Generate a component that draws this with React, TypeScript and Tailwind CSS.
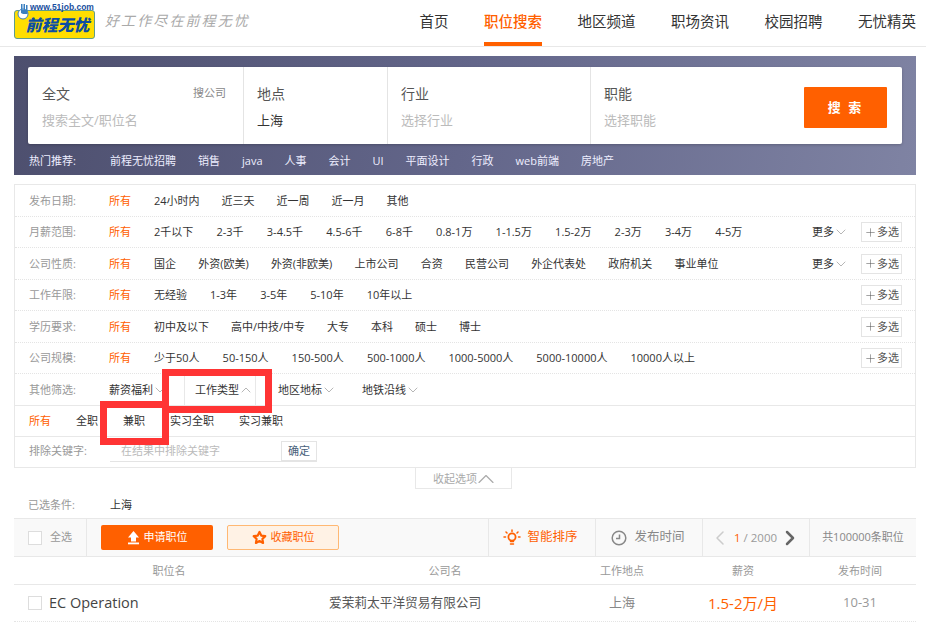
import { ChevronDown, ChevronUp, ChevronLeft, ChevronRight, Plus } from 'lucide-react'

const navItems = ['首页', '职位搜索', '地区频道', '职场资讯', '校园招聘', '无忧精英']
const hotItems = ['前程无忧招聘', '销售', 'java', '人事', '会计', 'UI', '平面设计', '行政', 'web前端', '房地产']

const filterRows = [
  { label: '发布日期:', gap: 'gap-[22px]', items: ['24小时内', '近三天', '近一周', '近一月', '其他'] },
  { label: '月薪范围:', gap: 'gap-[23.200px]', items: ['2千以下', '2-3千', '3-4.5千', '4.5-6千', '6-8千', '0.8-1万', '1-1.5万', '1.5-2万', '2-3万', '3-4万', '4-5万'], more: true, multi: true },
  { label: '公司性质:', gap: 'gap-[22.200px]', items: ['国企', '外资(欧美)', '外资(非欧美)', '上市公司', '合资', '民营公司', '外企代表处', '政府机关', '事业单位'], more: true, multi: true },
  { label: '工作年限:', gap: 'gap-[23px]', items: ['无经验', '1-3年', '3-5年', '5-10年', '10年以上'], multi: true },
  { label: '学历要求:', gap: 'gap-[22px]', items: ['初中及以下', '高中/中技/中专', '大专', '本科', '硕士', '博士'], multi: true },
  { label: '公司规模:', gap: 'gap-[23px]', items: ['少于50人', '50-150人', '150-500人', '500-1000人', '1000-5000人', '5000-10000人', '10000人以上'], multi: true },
]

function SmallChevron({ up }: { up?: boolean }) {
  const Icon = up ? ChevronUp : ChevronDown
  return <Icon size={16} strokeWidth={1.300} className="mr-[-2px] ml-[-1px] text-[#aaa]" />
}

function SearchField({ label, value, width, dark }: { label: string; value: string; width: string; dark?: boolean }) {
  return (
    <div className={`${width} h-full shrink-0 border-r border-[#e4e4e4] pl-[13px] pt-[16px]`}>
      <div className="text-[14px] leading-[22px] text-[#555]">{label}</div>
      <div className={`mt-[4px] text-[13px] leading-[22px] ${dark ? 'text-[#333]' : 'text-[#bbb]'}`}>{value}</div>
    </div>
  )
}

function Logo() {
  return (
    <div className="relative ml-[14px] mt-[10px] flex h-[29px] w-[81px] shrink-0 items-center justify-center rounded-[3px] border border-[#5f9c8c] bg-[#ffde00]">
      <span className="pl-[6px] text-[16px] leading-none font-black text-[#0b4ea2] italic">前程无忧</span>
      <span className="absolute top-[-8px] left-[15px] text-[8.500px] leading-[8px] font-bold whitespace-nowrap text-[#1a4fa0] [font-family:'Liberation_Sans',sans-serif]">www.51job.com</span>
      <svg className="absolute top-[-8px] left-[2px]" width="13" height="17" viewBox="0 0 13 17">
        <circle cx="6" cy="11" r="5" fill="#fff" stroke="#3a7fc0" />
        <path d="M4 10V1h1.500v6h1V1H8v6h1V2h1.500v9H6z" fill="#3a7fc0" />
      </svg>
    </div>
  )
}

function Toolbar() {
  return (
    <div className="flex h-[39px] border-y border-[#e8e8e8] bg-[#f9f9f9]">
      <div className="flex w-[73px] shrink-0 items-center border-r border-[#e8e8e8] pl-[14px]">
        <span className="h-[14px] w-[14px] border border-[#ddd] bg-white" />
        <span className="ml-[8px] text-[11px] text-[#999]">全选</span>
      </div>
      <div className="flex flex-1 items-center gap-[14px] pl-[14px]">
        <button className="flex h-[25px] w-[112px] items-center justify-center gap-[4px] rounded-[2px] bg-[#ff6000] text-[11px] text-white">
          <svg width="13" height="15" viewBox="0 0 13 15" fill="#fff">
            <path d="M6.500 1l5.500 6.500H9v4H4v-4H1z" />
            <rect x="1" y="12.500" width="11" height="1.800" />
          </svg>
          申请职位
        </button>
        <button className="flex h-[25px] w-[112px] items-center justify-center gap-[4px] rounded-[2px] border border-[#ffb873] bg-[#fff2e5] text-[11px] text-[#ff6000]">
          <svg width="15" height="15" viewBox="0 0 24 24" fill="none" stroke="#ff6000" strokeWidth="3.500" strokeLinejoin="round">
            <path d="M12 3l2.800 5.900 6.400.9-4.600 4.500 1.100 6.400L12 17.700l-5.700 3 1.100-6.400-4.600-4.500 6.400-.9z" />
          </svg>
          收藏职位
        </button>
      </div>
      <div className="flex w-[107px] shrink-0 items-center justify-center gap-[6px] border-l border-[#e8e8e8] pr-[3px] text-[12.500px] text-[#ff6000]">
        <svg width="18" height="18" viewBox="0 0 18 18" fill="none" stroke="#ff6000" strokeWidth="1.500" strokeLinecap="round">
          <circle cx="9" cy="8" r="3.600" strokeWidth="1.800" />
          <path d="M7.500 15h3M9 1v1.500M3 3l1 1M15 3l-1 1M1 8h1.500M15.500 8H17M7.500 12.500h3" />
        </svg>
        智能排序
      </div>
      <div className="flex w-[107px] shrink-0 items-center justify-center gap-[7px] border-l border-[#e8e8e8] pr-[2px] text-[12.500px] text-[#888]">
        <svg width="16" height="16" viewBox="0 0 16 16" fill="none" stroke="#888" strokeWidth="1.500">
          <circle cx="8" cy="8" r="6.800" />
          <path d="M8.500 4.500V8.500H5" />
        </svg>
        发布时间
      </div>
      <div className="flex w-[107px] shrink-0 items-center border-l border-[#e8e8e8] pl-[5px] text-[11.500px] text-[#999]">
        <ChevronLeft size={24} strokeWidth={1.500} className="mr-[2px] text-[#ccc]" />
        <span><span className="text-[#ff6000]">1</span> / 2000</span>
        <ChevronRight size={24} strokeWidth={2.500} className="ml-[1px] text-[#666]" />
      </div>
      <div className="flex w-[107px] shrink-0 items-center justify-center border-l border-[#e8e8e8] text-[11px] text-[#888]">共100000条职位</div>
    </div>
  )
}

export default function App() {
  return (
    <div className="relative h-[624px] w-[926px] overflow-hidden bg-white [font-family:'Open_Sans','Noto_Sans_CJK_SC',sans-serif]">
      <header className="flex h-[47px] border-b border-[#e8e8e8]">
        <Logo />
        <span className="ml-[10px] mt-[12px] text-[14px] leading-[20px] tracking-[2.100px] whitespace-nowrap text-[#aaa] italic [font-family:'Liberation_Serif','Noto_Sans_CJK_SC',serif]">好工作尽在前程无忧</span>
        <nav className="ml-auto flex gap-[35.500px] pr-[10px]">
          {navItems.map((item) => (
            <a key={item} className={`h-[46px] pt-[12px] text-[14.500px] leading-[20px] ${item === '职位搜索' ? 'border-b-4 border-[#ff6000] font-medium text-[#ff6000]' : 'text-[#333]'}`}>
              {item}
            </a>
          ))}
        </nav>
      </header>

      <section className="mt-[9px] mr-[10px] ml-[14px] h-[119px] bg-[linear-gradient(100deg,#4d4f6e_0%,#63668a_50%,#7f83a3_100%)] px-[14px] pt-[11px]">
        <div className="flex h-[77px] rounded-[2px] bg-white shadow-[0_1px_3px_rgba(0,0,0,0.2)]">
          <div className="relative h-full w-[216px] shrink-0 border-r border-[#e4e4e4] pl-[14px] pt-[16px]">
            <div className="text-[14px] leading-[22px] text-[#555]">全文</div>
            <div className="mt-[4px] text-[13px] leading-[22px] text-[#bbb]">搜索全文/职位名</div>
            <span className="absolute top-[18px] right-[17px] text-[11px] leading-[16px] text-[#888]">搜公司</span>
          </div>
          <SearchField label="地点" value="上海" width="w-[144px]" dark />
          <SearchField label="行业" value="选择行业" width="w-[203px]" />
          <div className="flex flex-1 justify-between pl-[13px] pr-[15px] pt-[16px]">
            <div>
              <div className="text-[14px] leading-[22px] text-[#555]">职能</div>
              <div className="mt-[4px] text-[13px] leading-[22px] text-[#bbb]">选择职能</div>
            </div>
            <button className="mt-[4px] h-[41px] w-[83px] rounded-[1px] bg-[#ff6000] text-[13px] font-bold tracking-[2px] text-white">搜 索</button>
          </div>
        </div>
        <div className="flex h-[31px] items-center pt-[3px] text-[11px] text-[#eef]">
          <span className="ml-[1px] w-[81px] shrink-0">热门推荐:</span>
          <div className="flex gap-[22px]">
            {hotItems.map((item) => <span key={item}>{item}</span>)}
          </div>
        </div>
      </section>

      <section className="mt-[9px] mr-[10px] ml-[14px] border-x border-t border-[#e8e8e8] text-[11px] text-[#333]">
        {filterRows.map((row) => (
          <div key={row.label} className="flex h-[31.500px] items-center border-b border-dotted border-[#e4e4e4] pt-[1px] pr-[13px] pl-[14px]">
            <span className="w-[80px] shrink-0 text-[#999]">{row.label}</span>
            <span className="w-[45px] shrink-0 text-[#ff6000]">所有</span>
            <div className={`flex ${row.gap} whitespace-nowrap`}>
              {row.items.map((item) => <span key={item}>{item}</span>)}
            </div>
            <div className="ml-auto flex items-center gap-[14px]">
              {row.more && <span className="flex items-center">更多<SmallChevron /></span>}
              {row.multi && (
                <span className="flex h-[20px] w-[41px] items-center justify-center border border-[#e4e4e4] text-[#555]">
                  <Plus size={13} strokeWidth={1} />多选
                </span>
              )}
            </div>
          </div>
        ))}
        <div className="flex h-[31.500px] items-center border-b border-[#e8e8e8] pt-[1px] pl-[14px]">
          <span className="w-[80px] shrink-0 text-[#999]">其他筛选:</span>
          <span className="flex w-[75px] items-center">薪资福利<SmallChevron /></span>
          <span className="flex h-full w-[72px] items-center border-x border-[#e8e8e8] pl-[10px]">工作类型<SmallChevron up /></span>
          <span className="ml-[22px] flex w-[84px] items-center">地区地标<SmallChevron /></span>
          <span className="flex items-center">地铁沿线<SmallChevron /></span>
        </div>
        <div className="flex h-[31px] items-center gap-[25px] border-b border-[#e8e8e8] pt-[1px] pl-[14px]">
          <span className="w-[22px] text-[#ff6000]">所有</span>
          <span>全职</span>
          <span>兼职</span>
          <span>实习全职</span>
          <span>实习兼职</span>
        </div>
        <div className="flex h-[31px] items-center border-b border-[#e8e8e8] pl-[14px]">
          <span className="w-[81px] shrink-0 text-[#999]">排除关键字:</span>
          <div className="flex h-[21px] w-[207px] border-b border-[#e4e4e4]">
            <span className="flex-1 pl-[11px] leading-[20px] text-[#bbb]">在结果中排除关键字</span>
            <span className="flex w-[36px] items-center justify-center border border-[#e4e4e4] text-[#47607a]">确定</span>
          </div>
        </div>
      </section>

      <div className="mx-auto flex h-[21px] w-[97px] items-center justify-center border-x border-b border-[#e8e8e8] pt-[3px] text-[11px] text-[#aaa]">
        收起选项<ChevronUp size={28} strokeWidth={1} className="mr-[-7px] ml-[-5px] -my-[4px]" />
      </div>

      <div className="mr-[10px] ml-[14px] flex h-[29.500px] items-center pt-[4px] pl-[14px] text-[11px]">
        <span className="w-[82px] text-[#999]">已选条件:</span>
        <span className="text-[#333]">上海</span>
      </div>

      <div className="mr-[10px] ml-[14px]">
        <Toolbar />
        <div className="flex h-[28px] items-center border-b border-[#e8e8e8] pt-[1px] text-center text-[11px] text-[#999]">
          <span className="w-[310px]">职位名</span>
          <span className="w-[242px]">公司名</span>
          <span className="w-[112px]">工作地点</span>
          <span className="w-[130px]">薪资</span>
          <span className="w-[104px]">发布时间</span>
        </div>
        <div className="flex h-[37px] items-center border-b border-dotted border-[#e4e4e4] text-center text-[13px]">
          <div className="flex w-[315px] items-center pl-[14px]">
            <span className="h-[14px] w-[14px] border border-[#ddd]" />
            <span className="ml-[7px] text-[14.500px] text-[#444]">EC Operation</span>
          </div>
          <span className="w-[237px] text-left text-[12.700px] text-[#555]">爱茉莉太平洋贸易有限公司</span>
          <span className="w-[112px] text-[#888]">上海</span>
          <span className="w-[130px] text-[15px] text-[#ff6000]">1.5-2万/月</span>
          <span className="w-[104px] text-[#999]">10-31</span>
        </div>
      </div>

      <div className="absolute top-[369px] left-[162px] h-[44px] w-[110px] border-[7px] border-[#ff3434]" />
      <div className="absolute top-[401px] left-[100px] h-[44px] w-[69px] border-[7px] border-[#ff3434]" />
    </div>
  )
}
